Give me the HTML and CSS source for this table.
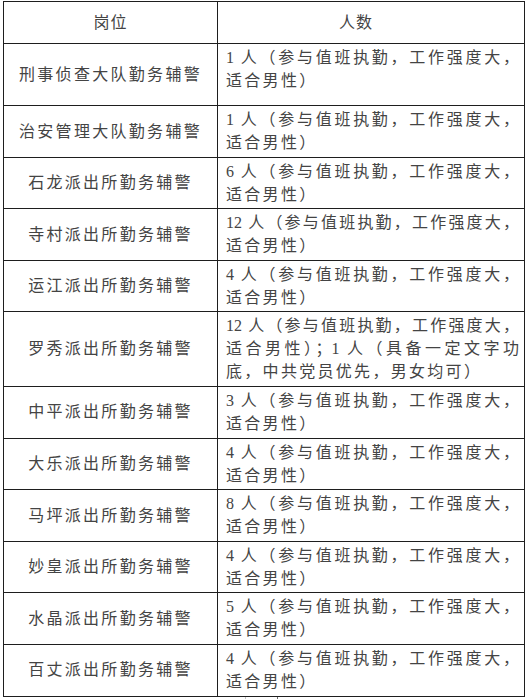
FILE: index.html
```html
<!DOCTYPE html>
<html lang="zh-CN">
<head>
<meta charset="utf-8">
<title>岗位人数</title>
<link rel="stylesheet" href="styles.css">
</head>
<body>
<table class="posts">
  <colgroup><col class="col-name"><col class="col-num"></colgroup>
  <thead>
    <tr><th class="h-name">岗位</th><th class="h-num">人数</th></tr>
  </thead>
  <tbody>
    <tr class="tall">
      <td class="name">刑事侦查大队勤务辅警</td>
      <td class="num"><span class="full">1 人（参与值班执勤，工作强度大，</span><span class="last">适合男性）</span></td>
    </tr>
    <tr>
      <td class="name">治安管理大队勤务辅警</td>
      <td class="num"><span class="full">1 人（参与值班执勤，工作强度大，</span><span class="last">适合男性）</span></td>
    </tr>
    <tr>
      <td class="name">石龙派出所勤务辅警</td>
      <td class="num"><span class="full">6 人（参与值班执勤，工作强度大，</span><span class="last">适合男性）</span></td>
    </tr>
    <tr>
      <td class="name">寺村派出所勤务辅警</td>
      <td class="num"><span class="full">12 人（参与值班执勤，工作强度大，</span><span class="last">适合男性）</span></td>
    </tr>
    <tr>
      <td class="name">运江派出所勤务辅警</td>
      <td class="num"><span class="full">4 人（参与值班执勤，工作强度大，</span><span class="last">适合男性）</span></td>
    </tr>
    <tr>
      <td class="name">罗秀派出所勤务辅警</td>
      <td class="num"><span class="full">12 人（参与值班执勤，工作强度大，</span><span class="full">适合男性）；1 人（具备一定文字功</span><span class="last">底，中共党员优先，男女均可）</span></td>
    </tr>
    <tr>
      <td class="name">中平派出所勤务辅警</td>
      <td class="num"><span class="full">3 人（参与值班执勤，工作强度大，</span><span class="last">适合男性）</span></td>
    </tr>
    <tr>
      <td class="name">大乐派出所勤务辅警</td>
      <td class="num"><span class="full">4 人（参与值班执勤，工作强度大，</span><span class="last">适合男性）</span></td>
    </tr>
    <tr>
      <td class="name">马坪派出所勤务辅警</td>
      <td class="num"><span class="full">8 人（参与值班执勤，工作强度大，</span><span class="last">适合男性）</span></td>
    </tr>
    <tr>
      <td class="name">妙皇派出所勤务辅警</td>
      <td class="num"><span class="full">4 人（参与值班执勤，工作强度大，</span><span class="last">适合男性）</span></td>
    </tr>
    <tr>
      <td class="name">水晶派出所勤务辅警</td>
      <td class="num"><span class="full">5 人（参与值班执勤，工作强度大，</span><span class="last">适合男性）</span></td>
    </tr>
    <tr>
      <td class="name">百丈派出所勤务辅警</td>
      <td class="num"><span class="full">4 人（参与值班执勤，工作强度大，</span><span class="last">适合男性）</span></td>
    </tr>
  </tbody>
</table>
<div class="tail"></div>
</body>
</html>
```
FILE: styles.css
```css
html, body {
  margin: 0;
  padding: 0;
  background: #ffffff;
}

body {
  font-family: "Liberation Serif", "Noto Sans CJK SC", serif;
  font-size: 16px;
  color: #444444;
}

.posts {
  border-collapse: collapse;
  table-layout: fixed;
  width: 521px;
  margin: 1px 0 0 3px;
}

.col-name { width: 214px; }
.col-num { width: 307px; }

.posts th,
.posts td {
  border: 1px solid #1e1e1e;
  line-height: 23px;
  font-weight: normal;
}

.posts th {
  padding: 9px 0;
  text-align: center;
  letter-spacing: 1px;
}

.posts th.h-num {
  padding-right: 30px;
}

.posts td {
  padding: 2px 5px 2.6px 8px;
  vertical-align: middle;
}

.posts td.name {
  padding: 2px 0 2.6px 0;
  text-align: center;
  letter-spacing: 2.3px;
}

.posts td.num {
  vertical-align: top;
}

.posts tr.tall td {
  padding-bottom: 12px;
}

.posts tr.tall td.name {
  padding-bottom: 3px;
  height: 56px;
}

.full {
  display: block;
  text-align: justify;
  text-align-last: justify;
  text-justify: inter-character;
}

.last {
  display: block;
  text-align: left;
  letter-spacing: 2.3px;
}

.tail {
  margin-left: 245px;
  width: 31px;
  height: 5px;
  border-left: 1px solid #c4c4c4;
  border-right: 1px solid #6a6a6a;
}
```
